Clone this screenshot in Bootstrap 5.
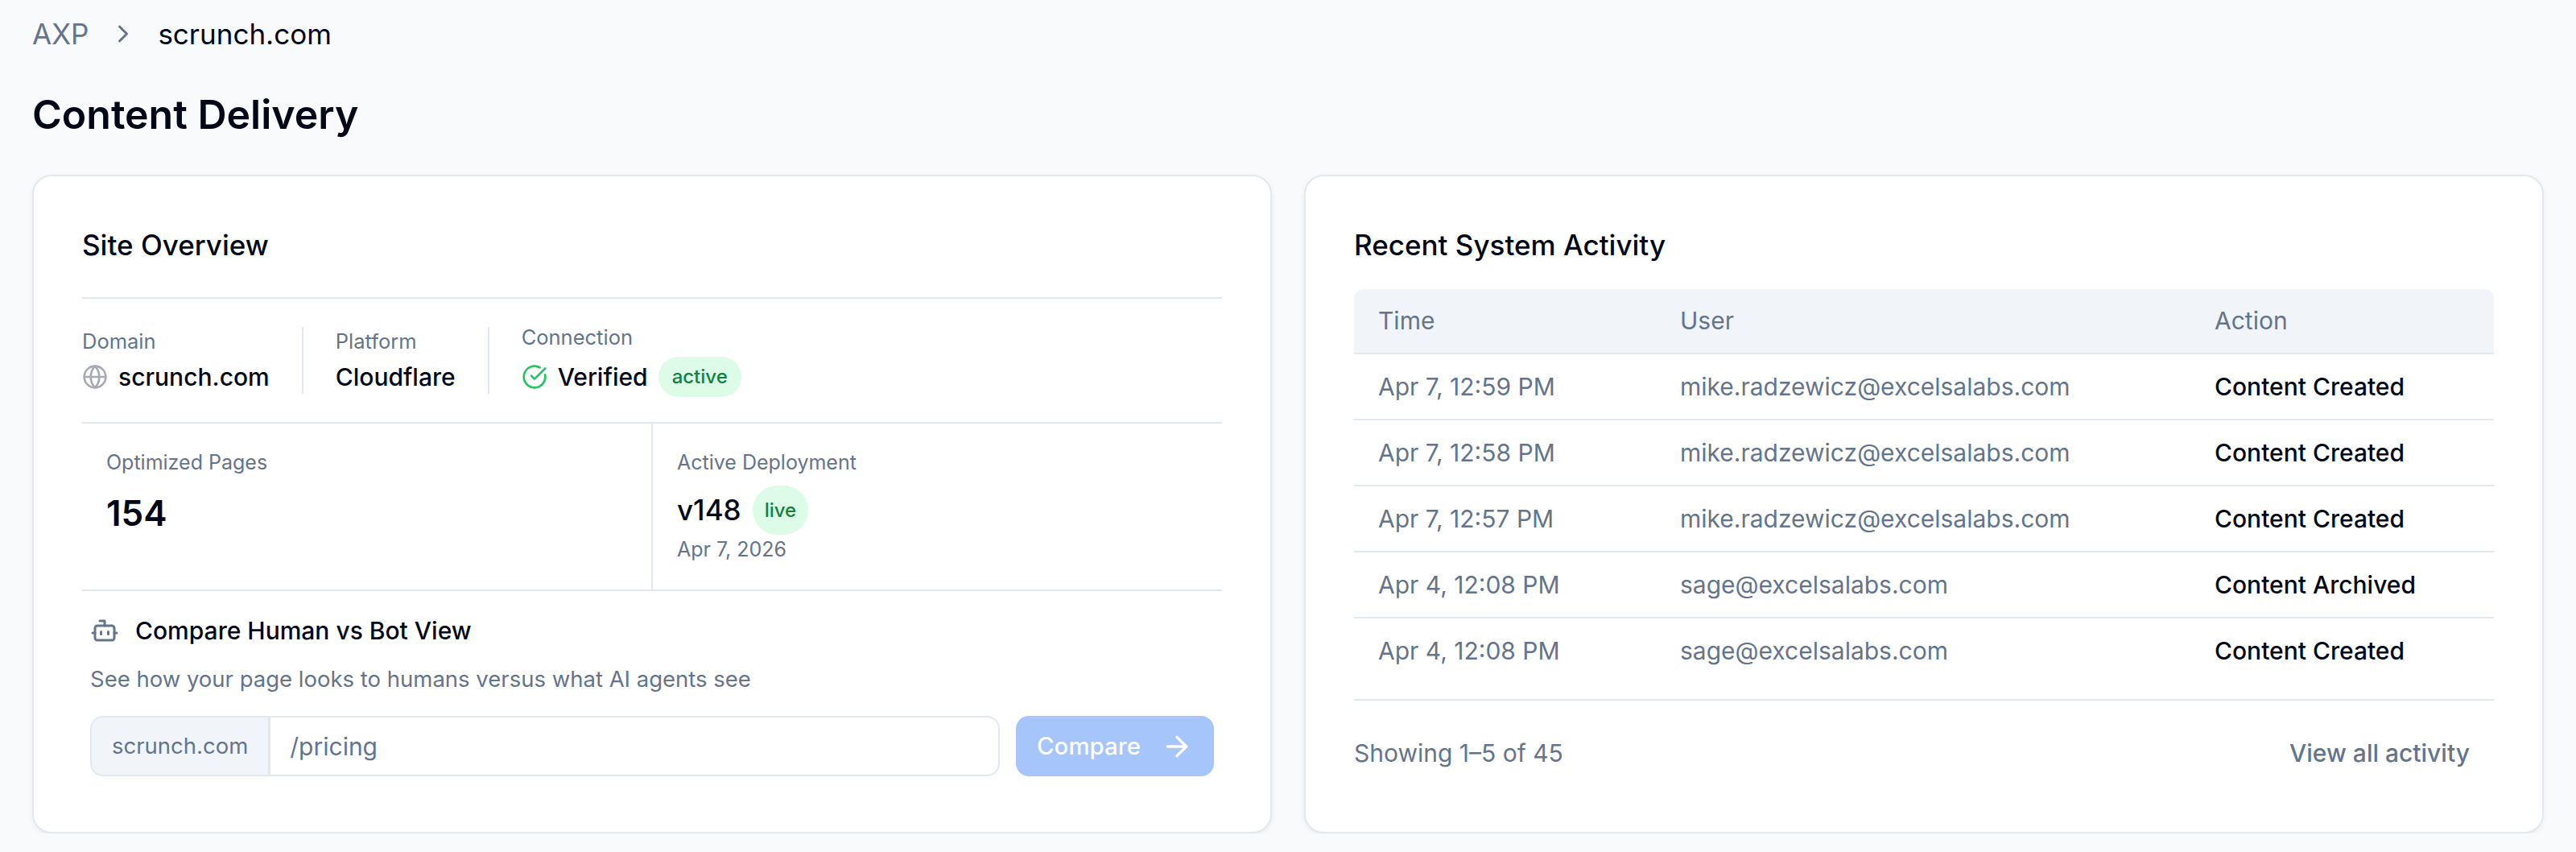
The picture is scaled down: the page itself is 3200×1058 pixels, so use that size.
<!DOCTYPE html>
<html lang="en">
<head>
    <meta charset="UTF-8">
    <title>Content Delivery</title>
    <link href="https://cdn.jsdelivr.net/npm/bootstrap@5.3.3/dist/css/bootstrap.min.css" rel="stylesheet">
    <style>
        body {
            background-color: #f8fafc;
            color: #020817;
            font-family: Inter, "Liberation Sans", sans-serif;
            font-size: 30px;
        }

        .page {
            padding: 20px 40px 0;
        }

        .muted {
            color: #64748b;
        }

        .crumbs {
            line-height: 44px;
            font-size: 35px;
            gap: 25px;
            margin-bottom: 48px;
        }

        .page-title {
            font-size: 50px;
            line-height: 60px;
            font-weight: 600;
            margin-bottom: 45px;
        }

        .cards {
            --bs-gutter-x: 40px;
            --bs-gutter-y: 0;
        }

        .panel {
            height: 818px;
            border: 2px solid #e2e8f0;
            border-radius: 24px;
            box-shadow: 0 2px 6px rgba(15, 23, 42, .06);
            background: #fff;
        }

        .panel .card-body {
            padding: 60px 60px 0;
        }

        .panel-title {
            font-size: 35px;
            line-height: 50px;
            font-weight: 500;
            margin-bottom: 0;
        }

        .info-row {
            margin-top: 40px;
            padding: 30px 0;
            border-top: 2px solid #e2e8f0;
            border-bottom: 2px solid #e2e8f0;
        }

        .info-col {
            padding-right: 40px;
            margin-right: 40px;
            border-right: 2px solid #e2e8f0;
        }

        .lbl {
            font-size: 25.5px;
            line-height: 36px;
            margin-bottom: 5px;
        }

        .stat .lbl {
            font-size: 25px;
        }

        .val {
            line-height: 42px;
            font-weight: 500;
            gap: 13px;
        }

        .val-tall {
            min-height: 52px;
        }

        .pill {
            background: #dcfce7;
            color: #15803d;
            border-radius: 999px;
            font-size: 24px;
            font-weight: 500;
            line-height: 50px;
            padding: 0 17px;
        }

        .stat {
            padding: 30px;
            height: 206px;
        }

        .stat:first-child {
            flex: 0 0 707px;
            width: 707px;
        }

        .stat + .stat {
            border-left: 2px solid #e2e8f0;
            flex: 1 1 auto;
        }

        .stat-num {
            font-size: 44px;
            line-height: 60px;
            font-weight: 600;
            margin-top: 15px;
        }

        .stat-ver {
            font-size: 35px;
            font-weight: 500;
            gap: 14px;
            margin-top: 11px;
            line-height: 61px;
        }

        .stat-ver .pill {
            line-height: 61px;
            padding: 0 15px;
        }

        .compare {
            border-top: 2px solid #e2e8f0;
            padding: 27px 10px 0;
        }

        .compare-title {
            line-height: 44px;
            font-weight: 500;
            gap: 20px;
        }

        .compare-sub {
            font-size: 27.5px;
            line-height: 40px;
            margin: 18px 0 26px;
        }

        .compare-form {
            gap: 20px;
        }

        .compare .input-group-text,
        .compare .form-control {
            height: 75px;
            font-size: 30px;
            color: #64748b;
            border: 2px solid #e2e8f0;
        }

        .compare .input-group-text {
            background: #f1f5f9;
            padding: 0 25px;
            font-size: 27.5px;
            border-radius: 16px 0 0 16px;
        }

        .compare .form-control {
            padding: 0 24px;
            border-radius: 0 16px 16px 0;
            box-shadow: none;
        }

        .compare .btn {
            flex: 0 0 246px;
            height: 75px;
            background: #a5c5fb;
            color: #fff;
            border: 0;
            border-radius: 16px;
            font-size: 29.5px;
            font-weight: 500;
            opacity: 1;
            gap: 25px;
            padding: 0;
        }

        .activity {
            margin: 30px 0 19px;
            table-layout: fixed;
            --bs-table-bg: transparent;
        }

        .activity th,
        .activity td {
            padding: 0 30px;
            height: 82px;
            border-bottom: 2px solid #e2e8f0;
            vertical-align: middle;
            font-size: 30px;
            color: #64748b;
            font-weight: 400;
        }

        .activity th {
            background: #f1f5f9;
            height: 80px;
        }

        .col-time {
            width: 375px;
        }

        .col-user {
            width: 664px;
        }

        .activity th:first-child {
            border-top-left-radius: 12px;
        }

        .activity th:last-child {
            border-top-right-radius: 12px;
        }

        .activity tr:last-child td {
            border-bottom: 0;
        }

        .activity td.act {
            color: #020817;
            font-weight: 500;
        }

        .foot {
            border-top: 2px solid #e2e8f0;
            height: 132px;
        }

        .foot a {
            color: #64748b;
            text-decoration: none;
            padding: 0 30px;
            font-weight: 500;
        }
    </style>
</head>
<body>

<div class="page">
    <div class="crumbs d-flex align-items-center">
        <span class="muted">AXP</span>
        <svg width="36" height="36" viewBox="0 0 24 24" fill="none" stroke="#64748b" stroke-width="2" stroke-linecap="round" stroke-linejoin="round"><path d="m9 18 6-6-6-6"/></svg>
        <span>scrunch.com</span>
    </div>
    <h1 class="page-title">Content Delivery</h1>

    <div class="row cards">
        <div class="col-6">
            <div class="card panel">
                <div class="card-body">
                    <h2 class="panel-title">Site Overview</h2>

                    <div class="info-row d-flex align-items-center">
                        <div class="info-col">
                            <div class="lbl muted">Domain</div>
                            <div class="val d-flex align-items-center">
                                <svg width="32" height="32" viewBox="0 0 24 24" fill="none" stroke="#a8abb2" stroke-width="2" stroke-linecap="round" stroke-linejoin="round"><circle cx="12" cy="12" r="10"/><path d="M12 2a14.5 14.5 0 0 0 0 20 14.5 14.5 0 0 0 0-20"/><path d="M2 12h20"/></svg>
                                scrunch.com
                            </div>
                        </div>
                        <div class="info-col">
                            <div class="lbl muted">Platform</div>
                            <div class="val">Cloudflare</div>
                        </div>
                        <div>
                            <div class="lbl muted">Connection</div>
                            <div class="val val-tall d-flex align-items-center">
                                <svg width="32" height="32" viewBox="0 0 24 24" fill="none" stroke="#22c55e" stroke-width="2" stroke-linecap="round" stroke-linejoin="round"><path d="M21.801 10A10 10 0 1 1 17 3.335"/><path d="m9 11 3 3L22 4"/></svg>
                                Verified
                                <span class="pill">active</span>
                            </div>
                        </div>
                    </div>

                    <div class="d-flex">
                        <div class="stat">
                            <div class="lbl muted">Optimized Pages</div>
                            <div class="stat-num">154</div>
                        </div>
                        <div class="stat">
                            <div class="lbl muted">Active Deployment</div>
                            <div class="stat-ver d-flex align-items-center">v148 <span class="pill">live</span></div>
                            <div class="lbl muted mb-0">Apr 7, 2026</div>
                        </div>
                    </div>

                    <div class="compare">
                        <div class="compare-title d-flex align-items-center">
                            <svg width="36" height="36" viewBox="0 0 24 24" fill="none" stroke="#64748b" stroke-width="2" stroke-linecap="round" stroke-linejoin="round"><path d="M12 8V4H8"/><rect width="16" height="12" x="4" y="8" rx="2"/><path d="M2 14h2"/><path d="M20 14h2"/><path d="M15 13v2"/><path d="M9 13v2"/></svg>
                            Compare Human vs Bot View
                        </div>
                        <div class="compare-sub muted">See how your page looks to humans versus what AI agents see</div>
                        <div class="compare-form d-flex">
                            <div class="input-group">
                                <span class="input-group-text">scrunch.com</span>
                                <input type="text" class="form-control" value="/pricing">
                            </div>
                            <button class="btn d-flex align-items-center justify-content-center" disabled>
                                Compare
                                <svg width="40" height="40" viewBox="0 0 24 24" fill="none" stroke="#fff" stroke-width="2" stroke-linecap="round" stroke-linejoin="round"><path d="M5 12h14"/><path d="m12 5 7 7-7 7"/></svg>
                            </button>
                        </div>
                    </div>
                </div>
            </div>
        </div>

        <div class="col-6">
            <div class="card panel">
                <div class="card-body">
                    <h2 class="panel-title">Recent System Activity</h2>

                    <table class="table activity">
                        <thead>
                            <tr>
                                <th class="col-time">Time</th>
                                <th class="col-user">User</th>
                                <th>Action</th>
                            </tr>
                        </thead>
                        <tbody>
                            <tr>
                                <td>Apr 7, 12:59 PM</td>
                                <td>mike.radzewicz@excelsalabs.com</td>
                                <td class="act">Content Created</td>
                            </tr>
                            <tr>
                                <td>Apr 7, 12:58 PM</td>
                                <td>mike.radzewicz@excelsalabs.com</td>
                                <td class="act">Content Created</td>
                            </tr>
                            <tr>
                                <td>Apr 7, 12:57 PM</td>
                                <td>mike.radzewicz@excelsalabs.com</td>
                                <td class="act">Content Created</td>
                            </tr>
                            <tr>
                                <td>Apr 4, 12:08 PM</td>
                                <td>sage@excelsalabs.com</td>
                                <td class="act">Content Archived</td>
                            </tr>
                            <tr>
                                <td>Apr 4, 12:08 PM</td>
                                <td>sage@excelsalabs.com</td>
                                <td class="act">Content Created</td>
                            </tr>
                        </tbody>
                    </table>

                    <div class="foot d-flex align-items-center justify-content-between">
                        <span class="muted">Showing 1–5 of 45</span>
                        <a href="#">View all activity</a>
                    </div>
                </div>
            </div>
        </div>
    </div>
</div>

<script src="https://cdn.jsdelivr.net/npm/bootstrap@5.3.3/dist/js/bootstrap.bundle.min.js"></script>
</body>
</html>
